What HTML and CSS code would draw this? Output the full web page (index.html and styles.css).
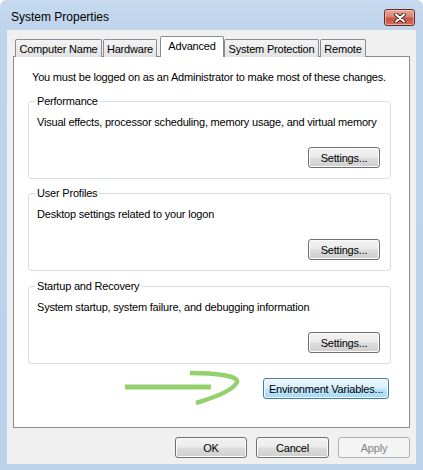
FILE: index.html
```html
<!DOCTYPE html>
<html>
<head>
<meta charset="utf-8">
<link rel="stylesheet" href="styles.css">
</head>
<body>
<div class="window">
  <div class="titlebar">
    <span class="title">System Properties</span>
    <button class="close" aria-label="Close">
      <svg width="12" height="10" viewBox="0 0 12 10">
        <path d="M2 1.5 L10 8.5 M10 1.5 L2 8.5" stroke="#4a2020" stroke-width="4" stroke-linecap="round"/>
        <path d="M2 1.5 L10 8.5 M10 1.5 L2 8.5" stroke="#ffffff" stroke-width="2.2" stroke-linecap="round"/>
      </svg>
    </button>
  </div>
  <div class="client">
    <div class="tabs">
      <div class="tab t-cn">Computer Name</div>
      <div class="tab t-hw">Hardware</div>
      <div class="tab t-adv selected">Advanced</div>
      <div class="tab t-sp">System Protection</div>
      <div class="tab t-rm">Remote</div>
    </div>
    <div class="page">
      <p class="notice">You must be logged on as an Administrator to make most of these changes.</p>
      <div class="group g1">
        <span class="group-title">Performance</span>
        <p class="desc">Visual effects, processor scheduling, memory usage, and virtual memory</p>
        <button class="btn">Settings...</button>
      </div>
      <div class="group g2">
        <span class="group-title">User Profiles</span>
        <p class="desc">Desktop settings related to your logon</p>
        <button class="btn">Settings...</button>
      </div>
      <div class="group g3">
        <span class="group-title">Startup and Recovery</span>
        <p class="desc">System startup, system failure, and debugging information</p>
        <button class="btn">Settings...</button>
      </div>
      <div class="env-row">
        <svg class="arrow" width="125" height="42" viewBox="0 0 125 42">
          <path d="M4 19 L90 19" stroke="#93d16c" stroke-width="5" fill="none"/>
          <path d="M69 5 C 95 5, 118 8, 116 14 C 113 22, 95 29, 75 35" stroke="#93d16c" stroke-width="4.5" fill="none"/>
        </svg>
        <button class="btn btn-default env">Environment Variables...</button>
      </div>
    </div>
    <div class="actions">
      <button class="btn act">OK</button>
      <button class="btn act">Cancel</button>
      <button class="btn act" disabled>Apply</button>
    </div>
  </div>
</div>
</body>
</html>
```
FILE: styles.css
```css
* { box-sizing: border-box; }
html, body { margin: 0; padding: 0; }
body {
  width: 423px;
  height: 470px;
  overflow: hidden;
  font-family: "Liberation Sans", Arial, sans-serif;
  font-size: 11px;
  letter-spacing: -0.2px;
  color: #000;
}
.window {
  width: 423px;
  height: 470px;
  display: flex;
  flex-direction: column;
  background: linear-gradient(180deg, #c6d9ee 0px, #bed4eb 30px, #bcd2ea 100%);
  border-radius: 6px 6px 0 0;
}
.titlebar {
  height: 30px;
  display: flex;
  align-items: flex-start;
  justify-content: space-between;
  padding-left: 11px;
}
.title {
  font-size: 12px;
  letter-spacing: 0;
  line-height: 14px;
  margin-top: 10px;
}
.close {
  margin: 9px 8px 0 0;
  width: 31px;
  height: 17px;
  padding: 0;
  border: 1px solid #6b2a2a;
  border-radius: 3px;
  background: linear-gradient(180deg, #e9a99a 0%, #d88471 45%, #c75544 55%, #d26e58 100%);
  box-shadow: inset 0 0 0 1px rgba(255, 220, 210, 0.55);
  display: flex;
  align-items: center;
  justify-content: center;
}
.client {
  margin: 0 7px 6px 7px;
  height: 434px;
  background: #f0f0f0;
  padding: 6px 6px 0 6px;
  display: flex;
  flex-direction: column;
}
.tabs {
  height: 21px;
  display: flex;
  align-items: flex-end;
  padding-left: 2px;
  margin-bottom: -1px;
  position: relative;
  z-index: 1;
}
.tab {
  height: 18px;
  border: 1px solid #898c95;
  border-bottom: none;
  border-radius: 2px 2px 0 0;
  background: linear-gradient(180deg, #f3f3f3 0%, #ebebeb 50%, #e3e3e3 100%);
  line-height: 16px;
  padding-top: 1px;
  text-align: center;
  white-space: nowrap;
}
.tab.selected {
  height: 21px;
  background: #fff;
  line-height: 18px;
  padding-top: 0;
}
.t-cn { width: 87px; }
.t-hw { width: 54px; margin-left: 1px; }
.t-adv { width: 64px; margin-left: 3px; }
.t-sp { width: 95px; margin-left: 0; }
.t-rm { width: 46px; margin-left: 1px; }
.page {
  height: 372px;
  background: #fff;
  border: 1px solid #898c95;
  padding: 13px 18px 0 14px;
  display: flex;
  flex-direction: column;
  position: relative;
}
.notice {
  margin: 0 0 0 4px;
  line-height: 14px;
}
.group {
  position: relative;
  height: 78px;
  border: 1px solid #d5dfe5;
  border-radius: 3px;
  padding: 13px 10px 10px 8px;
  display: flex;
  flex-direction: column;
  align-items: flex-start;
}
.g1 { margin-top: 17px; }
.g2 { margin-top: 14px; }
.g3 { margin-top: 15px; }
.group-title {
  position: absolute;
  top: -8px;
  left: 6px;
  padding: 0 2px;
  background: #fff;
  line-height: 14px;
}
.desc {
  margin: 0;
  line-height: 14px;
}
.group .btn {
  margin-top: auto;
  align-self: flex-end;
}
.btn {
  font-family: inherit;
  font-size: 11px;
  letter-spacing: -0.2px;
  color: #000;
  width: 72px;
  height: 21px;
  padding: 0;
  border: 1px solid #707070;
  border-radius: 3px;
  background: linear-gradient(180deg, #f2f2f2 0%, #ebebeb 49%, #dddddd 51%, #cfcfcf 100%);
  box-shadow: inset 0 0 0 1px #fcfcfc;
}
.btn-default {
  border-color: #3c7fb1;
  background: linear-gradient(180deg, #eaf6fd 0%, #d9f0fc 49%, #bee6fd 51%, #a7d9f5 100%);
}
.btn:disabled {
  border-color: #adb2b5;
  background: #f4f4f4;
  color: #838383;
  box-shadow: none;
}
.env-row {
  margin-top: 14px;
  padding-right: 2px;
  display: flex;
  justify-content: flex-end;
}
.env { width: 126px; }
.arrow {
  position: absolute;
  left: 107px;
  top: 311px;
}
.actions {
  margin-top: 9px;
  display: flex;
  justify-content: flex-end;
  gap: 9px;
}
.act:nth-child(2) { width: 73px; }
```
